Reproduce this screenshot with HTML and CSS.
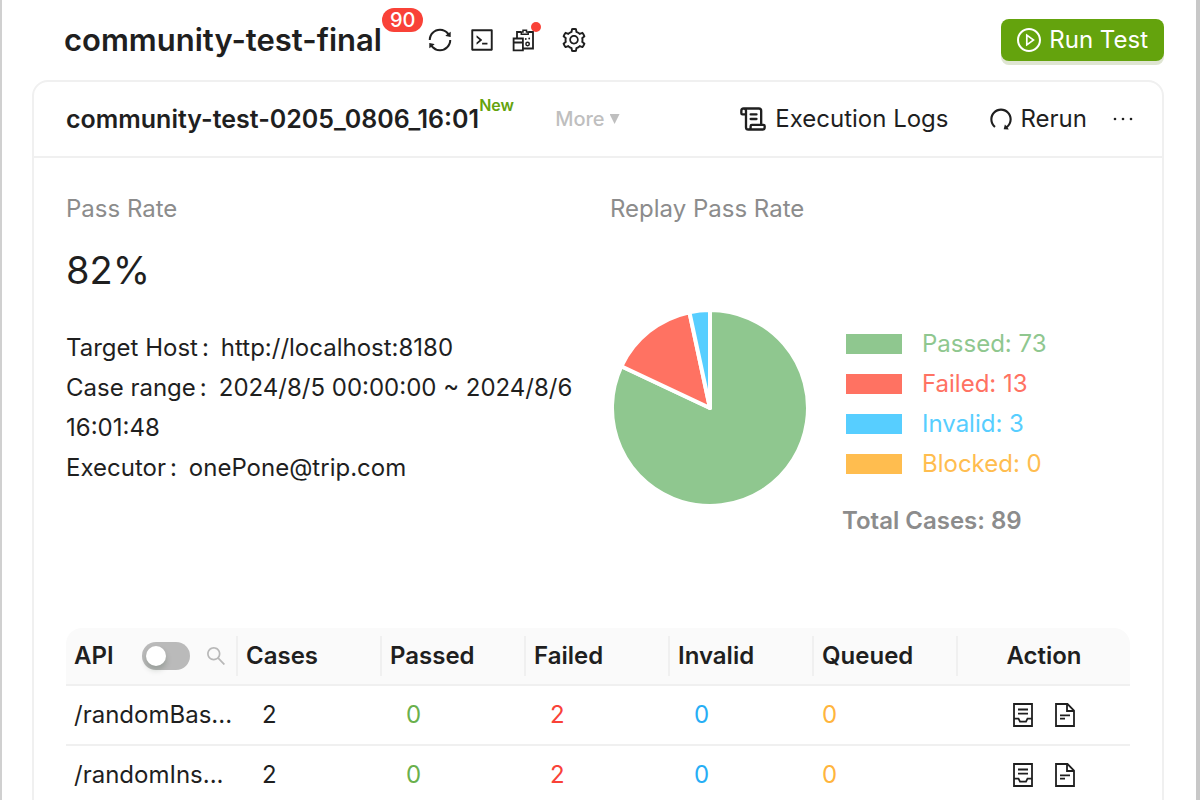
FILE: index.html
```html
<!DOCTYPE html>
<html lang="en">
<head>
<meta charset="utf-8">
<title>community-test-final</title>
<link rel="stylesheet" href="styles.css">
</head>
<body>
<svg class="sprite" aria-hidden="true">
  <symbol id="i-sync" viewBox="64 64 896 896"><path d="M168 504.2c1-43.7 10-86.1 26.9-126 17.3-41 42.1-77.7 73.7-109.4S337 212.3 378 195c42.4-17.9 87.4-27 133.9-27s91.5 9.1 133.8 27A341.5 341.5 0 01755 268.8c9.9 9.9 19.2 20.4 27.8 31.4l-60.2 47a8 8 0 003 14.1l175.7 43c5 1.2 9.9-2.6 9.9-7.7l.8-180.9c0-6.7-7.7-10.5-12.9-6.3l-56.4 44.1C765.8 155.1 646.2 92 511.8 92 282.7 92 96.3 275.6 92 503.8a8 8 0 008 8.2h60c4.4 0 7.9-3.5 8-7.8zm756 7.8h-60c-4.4 0-7.9 3.5-8 7.8-1 43.7-10 86.1-26.9 126-17.3 41-42.1 77.8-73.7 109.4A342.45 342.45 0 01512.1 856a342.24 342.24 0 01-243.2-100.8c-9.9-9.9-19.2-20.4-27.8-31.4l60.2-47a8 8 0 00-3-14.1l-175.7-43c-5-1.2-9.9 2.6-9.9 7.7l-.7 181c0 6.7 7.7 10.5 12.9 6.3l56.4-44.1C258.2 868.9 377.8 932 512.2 932c229.2 0 415.5-183.7 419.8-411.8a8 8 0 00-8-8.2z"/></symbol>
  <symbol id="i-code" viewBox="64 64 896 896"><path d="M516 673c0 4.4 3.4 8 7.5 8h185c4.1 0 7.5-3.6 7.5-8v-48c0-4.4-3.4-8-7.5-8h-185c-4.1 0-7.5 3.6-7.5 8v48zm-194.9 6.1l192-161c3.8-3.2 3.8-9.1 0-12.3l-192-160.9A7.95 7.95 0 00308 351v62.7c0 2.4 1 4.6 2.9 6.1L420.7 512l-109.8 92.2a8.1 8.1 0 00-2.9 6.1V673c0 6.8 7.9 10.5 13.1 6.1zM880 112H144c-17.7 0-32 14.3-32 32v736c0 17.7 14.3 32 32 32h736c17.7 0 32-14.3 32-32V144c0-17.7-14.3-32-32-32zm-40 728H184V184h656v656z"/></symbol>
  <symbol id="i-setting" viewBox="64 64 896 896"><path d="M924.8 625.7l-65.5-56c3.1-19 4.7-38.4 4.7-57.8s-1.6-38.8-4.7-57.8l65.5-56a32.03 32.03 0 009.3-35.2l-.9-2.6a443.74 443.74 0 00-79.7-137.9l-1.8-2.1a32.12 32.12 0 00-35.1-9.5l-81.3 28.9c-30-24.6-63.5-44-99.7-57.6l-15.7-85a32.05 32.05 0 00-25.8-25.7l-2.7-.5c-52.1-9.4-106.9-9.4-159 0l-2.7.5a32.05 32.05 0 00-25.8 25.7l-15.8 85.4a351.86 351.86 0 00-99 57.4l-81.9-29.1a32 32 0 00-35.1 9.5l-1.8 2.1a446.02 446.02 0 00-79.7 137.9l-.9 2.6c-4.5 12.5-.8 26.5 9.3 35.2l66.3 56.6c-3.1 18.8-4.6 38-4.6 57.1 0 19.2 1.5 38.4 4.6 57.1L99 625.5a32.03 32.03 0 00-9.3 35.2l.9 2.6c18.1 50.4 44.9 96.9 79.7 137.9l1.8 2.1a32.12 32.12 0 0035.1 9.5l81.9-29.1c29.8 24.5 63.1 43.9 99 57.4l15.8 85.4a32.05 32.05 0 0025.8 25.7l2.7.5a449.4 449.4 0 00159 0l2.7-.5a32.05 32.05 0 0025.8-25.7l15.7-85a350 350 0 0099.7-57.6l81.3 28.9a32 32 0 0035.1-9.5l1.8-2.1c34.8-41.1 61.6-87.5 79.7-137.9l.9-2.6c4.5-12.3.8-26.3-9.3-35zM788.3 465.9c2.5 15.1 3.8 30.6 3.8 46.1s-1.3 31-3.8 46.1l-6.6 40.1 74.7 63.9a370.03 370.03 0 01-42.6 73.6L721 702.8l-31.4 25.8c-23.9 19.6-50.5 35-79.3 45.8l-38.1 14.3-17.9 97a377.5 377.5 0 01-85 0l-17.9-97.2-37.8-14.5c-28.5-10.8-55-26.2-78.7-45.7l-31.4-25.9-93.4 33.2c-17-22.9-31.2-47.6-42.6-73.6l75.5-64.5-6.5-40c-2.4-14.9-3.7-30.3-3.7-45.5 0-15.3 1.2-30.6 3.7-45.5l6.5-40-75.5-64.5c11.3-26.1 25.6-50.7 42.6-73.6l93.4 33.2 31.4-25.9c23.7-19.5 50.2-34.9 78.7-45.7l37.9-14.3 17.9-97.2c28.1-3.2 56.8-3.2 85 0l17.9 97 38.1 14.3c28.7 10.8 55.4 26.2 79.3 45.8l31.4 25.8 92.8-32.9c17 22.9 31.2 47.6 42.6 73.6L781.8 426l6.5 39.9zM512 326c-97.2 0-176 78.8-176 176s78.8 176 176 176 176-78.8 176-176-78.8-176-176-176zm79.2 255.2A111.6 111.6 0 01512 614c-29.9 0-58-11.7-79.2-32.8A111.6 111.6 0 01400 502c0-29.9 11.7-58 32.8-79.2C454 401.6 482.1 390 512 390c29.9 0 58 11.6 79.2 32.8A111.6 111.6 0 01624 502c0 29.9-11.7 58-32.8 79.2z"/></symbol>
  <symbol id="i-play" viewBox="64 64 896 896"><path d="M512 64C264.6 64 64 264.6 64 512s200.6 448 448 448 448-200.6 448-448S759.4 64 512 64zm0 820c-205.4 0-372-166.6-372-372s166.6-372 372-372 372 166.6 372 372-166.6 372-372 372z"/><path d="M719.4 499.1l-296.1-215A15.9 15.9 0 00398 297v430c0 13.1 14.8 20.5 25.3 12.9l296.1-215a15.9 15.9 0 000-25.8zm-257.6 134V390.9L628.5 512 461.8 633.1z"/></symbol>
  <symbol id="i-redo" viewBox="64 64 896 896"><path d="M758.2 839.1C851.8 765.9 912 651.9 912 523.9 912 303 733.5 124.3 512.6 124 291.4 123.7 112 302.8 112 523.9c0 125.2 57.5 236.9 147.6 310.2 3.5 2.8 8.6 2.2 11.4-1.3l39.4-50.5c2.7-3.4 2.1-8.3-1.2-11.1-8.1-6.6-15.9-13.7-23.4-21.2a318.64 318.64 0 01-68.6-101.7C200.4 609 192 567.1 192 523.9s8.4-85.1 25.1-124.5c16.1-38.1 39.2-72.3 68.6-101.7 29.4-29.4 63.6-52.5 101.7-68.6C426.9 212.4 468.8 204 512 204s85.1 8.4 124.5 25.1c38.1 16.1 72.3 39.2 101.7 68.6 29.4 29.4 52.5 63.6 68.6 101.7 16.7 39.4 25.1 81.3 25.1 124.5s-8.4 85.1-25.1 124.5a318.64 318.64 0 01-68.6 101.7c-9.3 9.3-19.1 18-29.3 26L668.2 724a8 8 0 00-14.1 3l-39.6 162.2c-1.2 5 2.6 9.9 7.7 9.9l167 .8c6.7 0 10.5-7.7 6.3-12.9l-37.3-47.9z"/></symbol>
  <symbol id="i-search" viewBox="64 64 896 896"><path d="M909.6 854.5L649.9 594.8C690.2 542.7 712 479 712 412c0-80.2-31.3-155.4-87.9-212.1-56.6-56.7-132-87.9-212.1-87.9s-155.5 31.3-212.1 87.9C143.2 256.5 112 331.8 112 412c0 80.1 31.3 155.5 87.9 212.1C256.5 680.8 331.8 712 412 712c67 0 130.6-21.8 182.7-62l259.7 259.6a8.2 8.2 0 0011.6 0l43.6-43.5a8.2 8.2 0 000-11.6zM570.4 570.4C528 612.7 471.8 636 412 636s-116-23.3-158.4-65.6C211.3 528 188 471.8 188 412s23.3-116.1 65.6-158.4C296 211.3 352.2 188 412 188s116.1 23.2 158.4 65.6S636 352.2 636 412s-23.3 116.1-65.6 158.4z"/></symbol>
  <symbol id="i-scroll" viewBox="0 0 24 24"><path fill="none" stroke="currentColor" stroke-width="2" stroke-linecap="round" stroke-linejoin="round" d="M15 12h-5M15 8h-5M19 17V5a2 2 0 0 0-2-2H4M8 21h12a2 2 0 0 0 2-2v-1a1 1 0 0 0-1-1H11a1 1 0 0 0-1 1v1a2 2 0 1 1-4 0V5a2 2 0 1 0-4 0v2a1 1 0 0 0 1 1h3"/></symbol>
  <symbol id="i-dots" viewBox="0 0 24 24"><circle cx="4" cy="12" r="1.3"/><circle cx="12" cy="12" r="1.3"/><circle cx="20" cy="12" r="1.3"/></symbol>
  <symbol id="i-board" viewBox="0 0 24 24"><g fill="none" stroke="currentColor" stroke-width="1.8"><path d="M1.600 10.500h9.300v11.800H1.600zM1.600 14.500h9.300"/><path d="M5 10V4h4M16.500 4H21v16.500H11"/><path d="M9.300 6.200V4H11V2.200h3.500V4h1.700v2.200z" stroke-width="1.500"/><circle cx="15.600" cy="16" r="1.700" stroke-width="1.500"/></g><circle cx="13.800" cy="11" r=".9"/><circle cx="17.200" cy="10.500" r=".9"/></symbol>
  <symbol id="i-case" viewBox="0 0 24 24"><path fill="none" stroke="currentColor" stroke-width="1.800" d="M3 1h18v22H3zM7 6.500h10M7 10.700h10M3 15.700h4.500l1.500 3h6l1.500-3H21"/></symbol>
  <symbol id="i-file" viewBox="0 0 24 24"><path fill="none" stroke="currentColor" stroke-width="1.800" d="M3 1h11.500L21 7.500V23H3zM14 1v7h7M7 12.300h10M7 15.700h5"/></symbol>
</svg>

<main class="app">
  <header class="topbar">
    <h1 class="topbar-title">community-test-final<span class="count">90</span></h1>
    <nav class="tools" aria-label="Plan tools">
      <button class="icon-btn" aria-label="Refresh"><svg><use href="#i-sync"/></svg></button>
      <button class="icon-btn" aria-label="Script"><svg><use href="#i-code"/></svg></button>
      <button class="icon-btn dotted" aria-label="Records"><svg><use href="#i-board"/></svg></button>
      <button class="icon-btn" aria-label="Settings"><svg><use href="#i-setting"/></svg></button>
    </nav>
    <button class="run"><svg><use href="#i-play"/></svg>Run Test</button>
  </header>

  <section class="card">
    <div class="card-head">
      <h2 class="card-title">community-test-0205_0806_16:01<span class="new">New</span></h2>
      <button class="more">More <span class="caret"></span></button>
      <div class="actions">
        <button class="action"><svg class="scroll"><use href="#i-scroll"/></svg>Execution Logs</button>
        <button class="action"><svg><use href="#i-redo"/></svg>Rerun</button>
        <button class="action" aria-label="More actions"><svg class="dots"><use href="#i-dots"/></svg></button>
      </div>
    </div>

    <div class="card-body">
      <div class="summary">
        <div>
          <h3 class="label">Pass Rate</h3>
          <p class="rate">82%</p>
          <dl class="facts">
            <div><dt>Target Host</dt><dd>http://localhost:8180</dd></div>
            <div><dt>Case range</dt><dd>2024/8/5 00:00:00 ~ 2024/8/6 16:01:48</dd></div>
            <div><dt>Executor</dt><dd>onePone@trip.com</dd></div>
          </dl>
        </div>
        <div>
          <h3 class="label">Replay Pass Rate</h3>
          <div class="chart">
            <svg class="pie" viewBox="-100 -100 200 200" role="img" aria-label="Replay pass rate">
              <g stroke="#fff" stroke-width="4" stroke-linejoin="round">
                <path fill="#8fc78f" d="M0 0V-98A98 98 0 1 1 -88.700 -41.700Z"/>
                <path fill="#ff7262" d="M0 0L-88.700 -41.700A98 98 0 0 1 -20.600 -95.800Z"/>
                <path fill="#57ceff" d="M0 0L-20.600 -95.800A98 98 0 0 1 0 -98Z"/>
              </g>
            </svg>
            <div>
              <ul class="legend">
                <li class="green">Passed: 73</li>
                <li class="red">Failed: 13</li>
                <li class="blue">Invalid: 3</li>
                <li class="amber">Blocked: 0</li>
              </ul>
              <p class="total">Total Cases: 89</p>
            </div>
          </div>
        </div>
      </div>

      <table class="results">
        <colgroup><col class="wide"><col><col><col><col><col><col class="wide"></colgroup>
        <thead>
          <tr>
            <th><div class="api-head">API<input class="switch" type="checkbox" aria-label="Show full path"><button class="search" aria-label="Search API"><svg><use href="#i-search"/></svg></button></div></th>
            <th>Cases</th><th>Passed</th><th>Failed</th><th>Invalid</th><th>Queued</th><th class="center">Action</th>
          </tr>
        </thead>
        <tbody>
          <tr>
            <td>/randomBas...</td><td class="num">2</td><td class="num passed">0</td><td class="num failed">2</td><td class="num invalid">0</td><td class="queued">0</td>
            <td><div class="row-actions"><button class="icon-btn" aria-label="Cases"><svg><use href="#i-case"/></svg></button><button class="icon-btn" aria-label="Report"><svg><use href="#i-file"/></svg></button></div></td>
          </tr>
          <tr>
            <td>/randomIns...</td><td class="num">2</td><td class="num passed">0</td><td class="num failed">2</td><td class="num invalid">0</td><td class="queued">0</td>
            <td><div class="row-actions"><button class="icon-btn" aria-label="Cases"><svg><use href="#i-case"/></svg></button><button class="icon-btn" aria-label="Report"><svg><use href="#i-file"/></svg></button></div></td>
          </tr>
        </tbody>
      </table>
    </div>
  </section>
</main>
</body>
</html>
```

FILE: styles.css
```css
* { box-sizing: border-box; }

body {
  margin: 0;
  background: #fff;
  color: #1f1f1f;
  font: 24px/40px Inter, "Liberation Sans", sans-serif;
}

h1, h2, h3, p, ul, dl, dd { margin: 0; padding: 0; }

button {
  padding: 0;
  border: 0;
  background: none;
  color: inherit;
  font: inherit;
  cursor: pointer;
}

svg {
  display: block;
  width: 24px;
  height: 24px;
  fill: currentColor;
}

.sprite { position: absolute; width: 0; height: 0; }

.app {
  display: flex;
  flex-direction: column;
  height: 100vh;
  overflow: hidden;
  padding: 0 32px 0 30px;
  border-left: 2px solid #d0d0d0;
  border-right: 4px solid #c8c8c8;
}

.topbar {
  display: flex;
  align-items: center;
  flex: none;
  height: 80px;
  padding-left: 32px;
}

.topbar-title {
  position: relative;
  font-size: 31px;
  font-weight: 600;
  line-height: 42px;
}

.count {
  position: absolute;
  left: 100%;
  top: -11px;
  padding: 0 8px;
  border-radius: 12px;
  background: #f94238;
  color: #fff;
  font-size: 20px;
  font-weight: 500;
  line-height: 24px;
}

.tools {
  display: flex;
  gap: 18px;
  margin-left: 46px;
}

.icon-btn { position: relative; }

.dotted { margin-right: 8px; }

.dotted::after {
  content: "";
  position: absolute;
  top: 2px;
  right: -5px;
  width: 10px;
  height: 10px;
  border-radius: 50%;
  background: #f94238;
}

.tools .dotted::after { top: -6px; }

.run {
  display: flex;
  align-items: center;
  gap: 8px;
  height: 42px;
  margin-left: auto;
  padding: 0 16px;
  border-radius: 8px;
  background: #64a30d;
  box-shadow: 0 4px 0 #dfe5d2;
  color: #fff;
}

.card {
  flex: none;
  border: 2px solid #f0f0f0;
  border-radius: 16px;
}

.card-head {
  display: flex;
  align-items: center;
  height: 76px;
  padding: 0 27px 0 32px;
  border-bottom: 2px solid #f0f0f0;
}

.card-title {
  position: relative;
  font-size: 25px;
  font-weight: 600;
}

.new {
  position: absolute;
  left: 100%;
  top: -6px;
  color: #64a30d;
  font-size: 16px;
  font-weight: 600;
  line-height: 24px;
}

.more {
  display: flex;
  align-items: center;
  gap: 5px;
  margin-left: 76px;
  color: #bfbfbf;
  font-size: 20px;
  font-weight: 500;
}

.caret {
  width: 10px;
  height: 10px;
  background: currentColor;
  clip-path: polygon(0 0, 100% 0, 50% 100%);
}

.actions {
  display: flex;
  gap: 40px;
  margin-left: auto;
}

.action {
  display: flex;
  align-items: center;
  gap: 8px;
}

.action:last-child { margin-left: -16px; }

.scroll { width: 28px; height: 28px; }

.card-body { padding: 31px 32px 32px; }

.summary {
  display: grid;
  grid-template-columns: 1fr 1fr;
  column-gap: 24px;
  min-height: 439px;
}

.label {
  color: #8c8c8c;
  font-size: 24px;
  font-weight: 400;
}

.rate {
  margin-top: 17px;
  font-size: 38px;
  line-height: 48px;
}

.facts { margin-top: 34px; }

.facts dt, .facts dd { display: inline; }

.facts dt::after {
  content: ":";
  margin: 0 12px 0 4px;
}

.chart {
  display: flex;
  gap: 32px;
  margin-top: 79px;
}

.pie { width: 200px; height: 200px; }

.legend {
  margin-top: 16px;
  list-style: none;
}

.legend li {
  display: flex;
  align-items: center;
  gap: 20px;
  padding-left: 4px;
}

.legend li::before {
  content: "";
  width: 56px;
  height: 20px;
  background: currentColor;
}

.green { color: #8fc78f; }
.red { color: #ff7262; }
.blue { color: #57ceff; }
.amber { color: #ffbd4f; }

.total {
  margin-top: 17px;
  color: #8c8c8c;
  font-weight: 600;
}

.results {
  width: 100%;
  table-layout: fixed;
  border-collapse: separate;
  border-spacing: 0;
}

.wide { width: 172px; }

.results th, .results td {
  padding: 8px;
  border-bottom: 2px solid #f0f0f0;
  text-align: left;
  white-space: nowrap;
}

.results th {
  position: relative;
  height: 58px;
  background: #fafafa;
  font-weight: 600;
}

.results td { height: 60px; }

.results th:first-child { border-top-left-radius: 16px; }
.results th:last-child { border-top-right-radius: 16px; }

.results th:not(:last-child)::after {
  content: "";
  position: absolute;
  top: 8px;
  right: 0;
  width: 2px;
  height: 40px;
  background: #f0f0f0;
}

.results .center { text-align: center; }
.results .num { padding-left: 24px; }

.passed { color: #6ab04c; }
.failed { color: #f94238; }
.invalid { color: #27aef5; }
.queued { color: #ffb53d; }

.api-head {
  display: flex;
  align-items: center;
}

.switch {
  appearance: none;
  display: flex;
  align-items: center;
  width: 48px;
  height: 28px;
  margin: 0 16px 0 auto;
  padding: 0 4px;
  border-radius: 14px;
  background: #bababa;
}

.switch::before {
  content: "";
  width: 20px;
  height: 20px;
  border-radius: 50%;
  background: #fff;
  box-shadow: 0 4px 6px rgba(0, 35, 11, 0.2);
}

.search { margin-right: 4px; color: #b8b8b8; }
.search svg { width: 20px; height: 20px; }

.row-actions {
  display: flex;
  justify-content: center;
  gap: 18px;
}
```
